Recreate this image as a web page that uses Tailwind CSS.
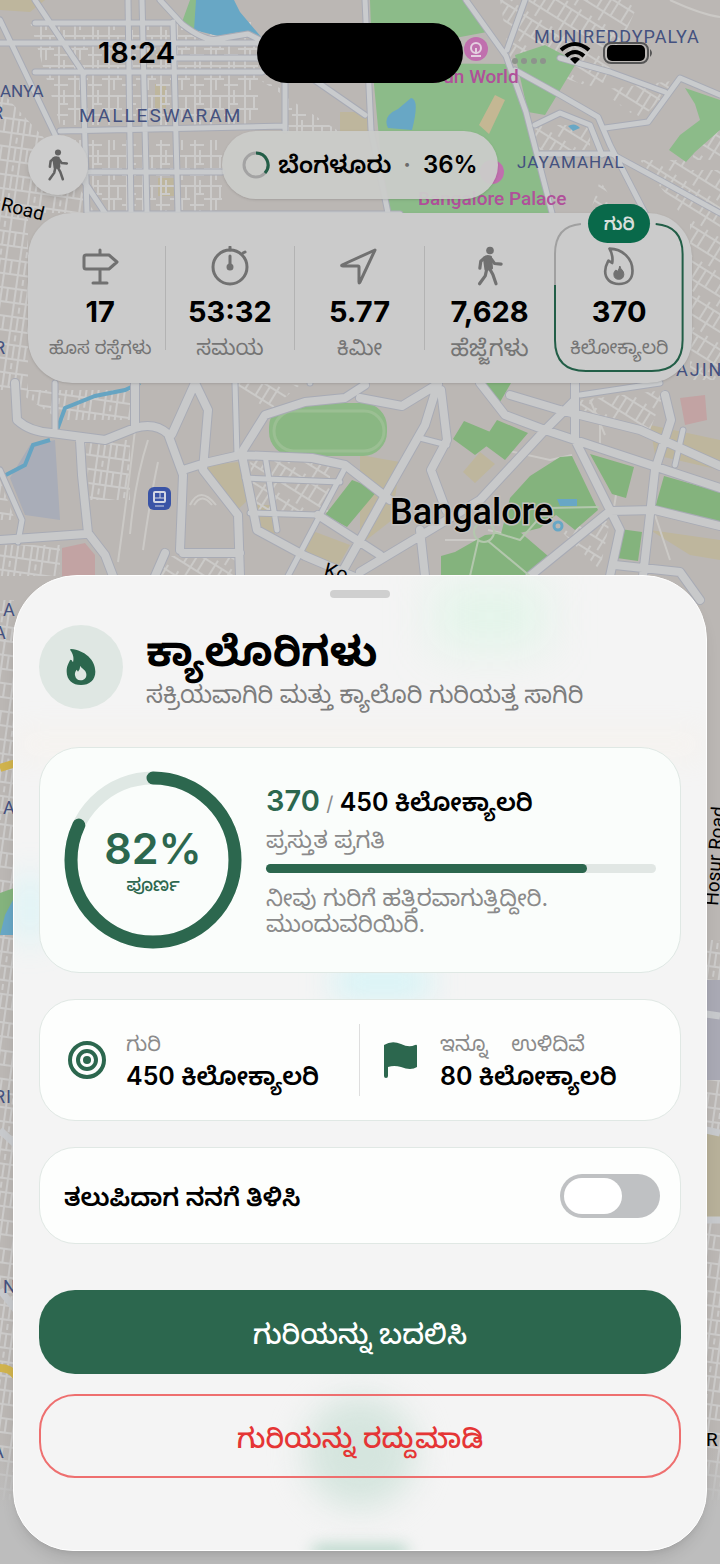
<!DOCTYPE html>
<html lang="kn">

<head>
    <meta charset="UTF-8">
    <meta name="viewport" content="width=device-width, initial-scale=1.0">
    <script src="https://cdn.jsdelivr.net/npm/@tailwindcss/browser@4"></script>
    <title>ಕ್ಯಾಲೊರಿಗಳು</title>
</head>

<body class="relative min-h-screen overflow-x-hidden bg-[#bdbab6] text-black font-[Inter,'Noto_Sans_Kannada','Noto_Sans',sans-serif]">

    <!-- Shared icons -->
    <svg class="hidden">
        <symbol id="walk" viewBox="0 0 80 126">
            <circle cx="40" cy="14" r="12" fill="currentColor" />
            <path d="M22 37Q30 30 42 35L45 70 27 74Z" fill="currentColor" stroke="currentColor" stroke-width="9" stroke-linejoin="round" />
            <path d="M22 38 11 48 8 70M45 42 54 55 75 57M30 72 25 94 7 119M38 70 49 90 59 119" fill="none" stroke="currentColor" stroke-width="10" stroke-linecap="round" stroke-linejoin="round" />
        </symbol>
    </svg>

    <!-- Map -->
    <svg class="absolute inset-0 w-full h-full" viewBox="0 0 720 1564" preserveAspectRatio="xMidYMin slice" aria-hidden="true">
        <defs>
            <pattern id="grid" width="34" height="30" patternUnits="userSpaceOnUse">
                <path d="M0 6H34M0 19H20M7 0V30M16 6V19M25 0V30M25 14H34M12 19V30M20 25H34M30 0V14" fill="none" stroke="#cccbca" stroke-width="2" />
            </pattern>
            <pattern id="dense" width="26" height="28" patternUnits="userSpaceOnUse" patternTransform="rotate(8)">
                <path d="M0 4H26M0 18H26M4 0V28M10 4V18M16 0V28M22 4V18M10 22V28" fill="none" stroke="#cccbca" stroke-width="2" />
            </pattern>
            <pattern id="slant" width="28" height="30" patternUnits="userSpaceOnUse" patternTransform="rotate(32)">
                <path d="M0 5H28M0 20H28M6 0V20M14 5V30M22 0V20" fill="none" stroke="#cbcac8" stroke-width="2" />
            </pattern>
            <linearGradient id="dock" x1="0" y1="0" x2="0" y2="1">
                <stop offset="0" stop-color="#bdbdbd" stop-opacity="0" />
                <stop offset="1" stop-color="#bdbdbd" />
            </linearGradient>
            <path id="roads" d="M0 20 60 145 105 213M35 0 84 74M83 72 87 213M128 0 131 213M142 0 147 213M173 22 178 213M35 23H172M0 43H258M172 58H258M35 72H262M60 131 285 126M90 172H222M90 214H400M160 0 182 24Q205 42 218 39L248 34 280 50M285 80V130M300 70 365 115M365 0 371 130 388 213M466 0 506 56 526 112 552 213M515 70 560 95 598 117 610 145 645 213M605 128 648 122 680 78 720 95M535 125 560 113 590 125 602 155M525 0 507 50M540 154H612L660 180 720 213M560 58 610 72 665 92M55 383V430M0 470 22 520 18 542M310 383V360M345 468 288 576M265 455 277 530M250 513 318 515M245 478 340 482M235 383 237 455M683 430 675 465M580 395 660 383M420 438 447 445" />
            <path id="avenues" d="M15 383 17 420Q30 432 52 433L105 440 135 428Q155 422 168 434L183 475 180 550M80 440 82 475 88 533 105 555 113 576M0 540 85 534M135 383V428M195 383 172 434M195 383 208 410 203 470 238 515 240 576M183 470 205 463 240 455 312 458 345 465 390 500M240 455 265 415 305 402 345 398 365 385M243 460 257 530 305 556 390 592M183 553H240M155 576 165 553M318 515 380 555M360 398 402 406 438 384M438 383 425 425 388 490 340 576M441 390 447 440 431 470 446 510M480 383 505 415 545 430 590 445 720 488M510 395 560 410 640 430 720 466M575 383V400L545 430 480 500 430 530 360 572M575 400V440L610 510 620 530 610 576M530 576 610 511 655 510 720 526M665 395 671 420 655 470 643 576M420 530 425 576M615 565 680 572 700 600" />
        </defs>
        <rect width="720" height="1564" fill="#bbb7b4" />

        <!-- tinted blocks -->
        <path d="M0 0H45L30 12 0 10ZM340 112H372V132H340ZM158 178H176V196H158ZM155 84H166V108H155ZM205 465 240 462 248 500 232 515ZM310 530 350 545 336 570 300 558ZM255 505H275V535H255ZM360 455 400 462 392 520 360 545ZM480 452 495 464 475 483 463 472ZM650 425 720 440 720 470 655 455ZM650 530 720 540V560L690 555Z" fill="#beb69d" />
        <path d="M30 445 55 440 60 520 25 515 10 478Z" fill="#a9adb8" />
        <path d="M62 548 85 543 95 555V576H62ZM680 398 705 395 707 420 685 425Z" fill="#c2a3a3" />

        <!-- small streets -->
        <path d="M30 22H258V125H60ZM70 140H222V212H105ZM260 80 340 132H285V90Z" fill="url(#grid)" />
        <path d="M0 90 55 150 95 213H0ZM0 213H28V390H0ZM85 440H130V500H90ZM15 390H130V420H60ZM0 545H60V576H0ZM0 480 15 520H0Z" fill="url(#dense)" />
        <path d="M500 0H640L600 90 510 60ZM600 90 680 80 640 120ZM530 125H590V150H540ZM640 160H720V213H680ZM690 213H720V380H690ZM690 170H720V100H705ZM600 180 620 213H590ZM580 400 665 390 650 430 580 410ZM250 460H330V515H255ZM165 556H235V576H160ZM560 530 610 520 600 570ZM225 383 300 385 270 410Z" fill="url(#slant)" />
        <path d="M135 430Q128 490 118 562M148 440Q135 480 130 534M158 462Q150 500 143 550M190 505Q200 485 216 505M194 505Q202 492 212 505M670 0Q700 14 720 17M600 420V445M590 400 605 435M505 450 550 460 572 455M655 515 670 560M445 540H480M488 530 510 535M620 470 612 520" fill="none" stroke="#cbc9c6" stroke-width="2" />

        <!-- parks -->
        <path d="M370 0H466L487 32 455 38 440 60H372ZM372 63 510 64 552 213H386ZM515 55 545 45 577 62 545 115 528 112ZM685 88 720 100V130L695 152 686 162 669 150 680 135 700 120 695 104ZM190 0H200L195 30 182 22Z" fill="#8cbb89" />
        <rect x="269" y="403" width="118" height="53" rx="24" fill="#8db986" />
        <rect x="274" y="411" width="110" height="40" rx="20" fill="#8ab783" stroke="#9bbf93" stroke-width="3" />
        <path d="M352 480 378 490 347 527 325 515ZM464 421 500 436 475 455 453 439ZM497 420 528 433 505 460 482 443ZM510 498 530 476 560 457 572 456 598 510 575 530 556 515 540 528 500 538ZM590 454 634 467 626 498 612 494ZM664 476 720 492V525L655 508ZM620 529 642 532 638 561 617 558ZM441 556 455 552 485 535 520 532 548 556 530 576H441ZM480 383H511L500 402Z" fill="#84b37d" />
        <path d="M495 95 505 100 489 134 479 125Z" fill="#c4b793" />

        <!-- water -->
        <path d="M196 0H234L240 12 262 38 240 32 218 36 194 30ZM388 128Q382 116 398 109L411 98Q420 99 412 130ZM568 126Q575 122 580 128L573 131ZM557 499H577V506H560Z" fill="#68a7c5" />
        <path d="M140 383 125 390 95 396 65 408 57 430M50 440 33 445 25 465 0 478" fill="none" stroke="#66a4c2" stroke-width="4" />
        <circle cx="558" cy="526" r="4" fill="none" stroke="#68a7c5" stroke-width="3" />

        <!-- main roads, casing then fill -->
        <g fill="none" stroke-linejoin="round" stroke-linecap="round">
            <use href="#roads" stroke="#a8abb5" stroke-width="7" />
            <use href="#avenues" stroke="#a8abb5" stroke-width="10" />
            <use href="#roads" stroke="#c9cbcd" stroke-width="5" />
            <use href="#avenues" stroke="#c8c9ca" stroke-width="8" />
            <circle cx="484" cy="532" r="10" stroke="#b3c7ad" stroke-width="2" />
            <path stroke="#b3c7ad" stroke-width="2" d="M478 541 470 576M488 541 530 576M494 532 520 540 548 508 598 507" />
        </g>

        <!-- edges either side of the sheet -->
        <path d="M0 600H14V1500H0ZM706 940H720V1500H706Z" fill="url(#dense)" />
        <path d="M706 1130H720V1220H706Z" fill="#b7b099" />
        <path d="M706 980H720V1080H706Z" fill="#a9a9b4" />
        <path d="M0 893 14 888V935H0Z" fill="#84b37d" />
        <path d="M14 898 5 915 0 935H14Z" fill="#68a7c5" />
        <path d="M0 768 16 763M0 1368Q10 1368 16 1376" fill="none" stroke="#d0b34d" stroke-width="8" />
        <path d="M706 1014 720 1016M706 1130 720 1133M706 1220H720M0 1130 16 1145M0 1290 16 1310" fill="none" stroke="#c7c9cc" stroke-width="7" />
        <rect y="1440" width="720" height="70" fill="url(#dock)" />
        <rect y="1510" width="720" height="54" fill="#bdbdbd" />

        <!-- place markers -->
        <circle cx="476" cy="49" r="12" fill="#c06fae" />
        <circle cx="476" cy="48" r="5" fill="none" stroke="#e4cfe0" stroke-width="2" />
        <path d="M476 48V54M471 56H481" stroke="#e4cfe0" stroke-width="2" />
        <circle cx="492" cy="172" r="12" fill="#c06fae" />
        <rect x="148" y="487" width="23" height="23" rx="6" fill="#3a54a6" />
        <rect x="154" y="492" width="11" height="10" rx="1" fill="none" stroke="#d3d7e4" stroke-width="2" />
        <path d="M154 498H165M160 492V498M155 506H164" stroke="#d3d7e4" stroke-width="1" />

        <!-- labels -->
        <g class="font-[Roboto,'Open_Sans',sans-serif]">
            <g fill="#44517f" font-size="19" letter-spacing="2">
                <text x="79" y="122">MALLESWARAM</text>
                <text x="534" y="43" font-size="18" letter-spacing="1">MUNIREDDYPALYA</text>
                <text x="517" y="168" font-size="17" letter-spacing="1">JAYAMAHAL</text>
                <text x="0" y="97" font-size="17" letter-spacing="0">ANYA</text>
                <text x="-8" y="119" font-size="18">R</text>
                <text x="-6" y="354" font-size="18">R</text>
                <text x="676" y="376" font-size="18">AJIN</text>
                <text x="3" y="616" font-size="18">A</text>
                <text x="-6" y="639" font-size="18">A</text>
                <text x="3" y="814" font-size="18">A</text>
                <text x="-6" y="1103" font-size="18" letter-spacing="1">RI</text>
                <text x="3" y="1293" font-size="18">N</text>
                <text x="-8" y="1458" font-size="18">A</text>
            </g>
            <g fill="#b0509a" font-size="19" font-weight="500">
                <text x="433" y="83">Fun World</text>
                <text x="418" y="205">Bangalore Palace</text>
            </g>
            <text x="0" y="210" font-size="19" transform="rotate(14 0 210)">Road</text>
            <text x="323" y="576" font-size="20" transform="rotate(14 323 576)">Ko</text>
            <text x="718" y="906" font-size="19" transform="rotate(-86 718 906)">Hosur Road</text>
            <text x="706" y="1446" font-size="19">R</text>
            <text x="390" y="524" font-size="36" font-weight="500" stroke="#c4c2bf" stroke-width="3" paint-order="stroke">Bangalore</text>
        </g>
    </svg>

    <div class="relative">
        <!-- Status bar -->
        <header class="grid grid-cols-[1fr_206px_1fr] items-center h-[106px]">
            <span class="pl-4 text-center text-[29px] font-semibold">18:24</span>
            <span class="h-[60px] rounded-full bg-black"></span>
            <span class="flex items-center gap-3 pl-12">
                <svg class="w-9 h-2 mt-4" viewBox="0 0 36 8" fill="#8d938c">
                    <circle cx="4" cy="4" r="3" />
                    <circle cx="13" cy="4" r="3" />
                    <circle cx="23" cy="4" r="3" />
                    <circle cx="32" cy="4" r="3" />
                </svg>
                <svg class="w-8 h-6" viewBox="0 0 32 24" fill="none" stroke="#000" stroke-width="4">
                    <path d="M2 9Q16 -3 30 9M7 15Q16 7 25 15" />
                    <path d="M16 23 11 18Q16 14 21 18Z" fill="#000" stroke="none" />
                </svg>
                <svg class="w-[51px] h-6" viewBox="0 0 51 24">
                    <rect x="1" y="2" width="44" height="20" rx="7" fill="none" stroke="#555" stroke-width="2" />
                    <rect x="4" y="4" width="38" height="16" rx="5" />
                    <path d="M47 8Q51 12 47 16Z" fill="#555" />
                </svg>
            </span>
        </header>

        <!-- Mode button and area pill -->
        <div class="grid grid-cols-[1fr_auto_1fr] items-center px-7 pt-[25px]">
            <button type="button" aria-label="ನಡಿಗೆ" class="flex items-center justify-center w-[60px] h-[60px] rounded-full bg-[#cdcdcd] text-[#626262] shadow-md">
                <svg class="w-6 h-8"><use href="#walk" /></svg>
            </button>
            <div class="flex items-center gap-2 h-[68px] px-5 rounded-full bg-[#cacbc9]/95 shadow-sm text-2xl font-semibold whitespace-nowrap">
                <svg class="w-7 h-7 shrink-0" viewBox="0 0 28 28" fill="none" stroke-width="3">
                    <circle cx="14" cy="14" r="12" stroke="#a3a3a3" />
                    <path d="M14 2A12 12 0 0 1 23 22" stroke="#225e47" />
                </svg>
                <span>ಬೆಂಗಳೂರು</span>
                <span class="px-1 text-[#6b6b6b]">·</span>
                <span>36%</span>
            </div>
        </div>

        <!-- Stats -->
        <section class="relative grid grid-cols-5 mx-7 mt-[14px] px-2 pt-[33px] h-[170px] rounded-[44px] bg-[#cbcbcb] shadow-sm text-center">
            <div class="flex flex-col items-center h-[104px] border-r border-[#b3b3b3]">
                <svg class="shrink-0 w-10 h-10" viewBox="0 0 40 40" fill="none" stroke="#717171" stroke-width="3" stroke-linecap="round" stroke-linejoin="round">
                    <path d="M20 4V8M6 9H29L37 16 29 23H6Q4 23 4 21V11Q4 9 6 9ZM20 24V37M13 37H27" />
                </svg>
                <strong class="mt-2 text-[29px] leading-9 font-bold">17</strong>
                <span class="mt-1 text-lg leading-7 text-[#757575] whitespace-nowrap">ಹೊಸ ರಸ್ತೆಗಳು</span>
            </div>
            <div class="flex flex-col items-center h-[104px] border-r border-[#b3b3b3]">
                <svg class="shrink-0 w-10 h-10" viewBox="0 0 40 40" fill="none" stroke="#717171" stroke-width="3" stroke-linecap="round">
                    <circle cx="20" cy="21" r="17" />
                    <path d="M20 1V4M33 7 35 6M20 10V20" />
                    <circle cx="20" cy="21" r="2" fill="#717171" />
                </svg>
                <strong class="mt-2 text-[29px] leading-9 font-bold">53:32</strong>
                <span class="mt-1 text-[21px] leading-7 text-[#757575] whitespace-nowrap">ಸಮಯ</span>
            </div>
            <div class="flex flex-col items-center h-[104px] border-r border-[#b3b3b3]">
                <svg class="shrink-0 w-10 h-10" viewBox="0 0 40 40" fill="none" stroke="#717171" stroke-width="3" stroke-linejoin="round">
                    <path d="M36 4 3 19Q2 20 4 20H19Q20 20 20 21V36Q20 38 21 36Z" />
                </svg>
                <strong class="mt-2 text-[29px] leading-9 font-bold">5.77</strong>
                <span class="mt-1 text-[21px] leading-7 text-[#757575] whitespace-nowrap">ಕಿಮೀ</span>
            </div>
            <div class="flex flex-col items-center h-[104px] text-[#717171]">
                <svg class="shrink-0 w-[26px] h-10"><use href="#walk" /></svg>
                <strong class="mt-2 text-[29px] leading-9 font-bold text-black">7,628</strong>
                <span class="mt-1 text-[23px] leading-7 text-[#757575] whitespace-nowrap">ಹೆಜ್ಜೆಗಳು</span>
            </div>
            <div class="relative flex flex-col items-center h-[104px]">
                <svg class="absolute -top-[24px] left-0 w-full h-[152px]" viewBox="0 0 130 152" preserveAspectRatio="none" fill="none">
                    <path d="M27 2Q1 4 1 32V63" stroke="#a0a0a0" stroke-width="2" />
                    <path d="M102 2Q129 4 129 32V118Q129 149 98 149H32Q1 149 1 118V63" stroke="#225e47" stroke-width="2" />
                </svg>
                <span class="absolute -top-[42px] flex items-center justify-center w-[62px] h-[39px] rounded-full bg-[#09694a] text-[#d6dfdb] text-lg font-semibold">ಗುರಿ</span>
                <svg class="shrink-0 w-8 h-10" viewBox="0 0 95 120" fill="none" stroke="#717171" stroke-width="8" stroke-linejoin="round">
                    <path d="M19 8C58 8 88 38 88 74C88 100 72 114 47 114C22 114 6 99 6 76C6 60 12 52 16 44L27 51Q31 30 19 8Z" />
                    <path d="M50 60C52 72 62 72 62 85C62 95 56 100 47 100C38 100 32 95 32 85C32 78 35 75 38 72L44 76Q48 68 50 60Z" fill="#717171" stroke-width="3" />
                </svg>
                <strong class="mt-2 text-[29px] leading-9 font-bold">370</strong>
                <span class="mt-1 text-[19px] leading-7 text-[#757575] whitespace-nowrap">ಕಿಲೋಕ್ಯಾಲರಿ</span>
            </div>
        </section>

        <!-- Goal sheet -->
        <main class="relative overflow-hidden mx-[13px] mt-48 mb-[13px] px-[25px] pb-[72px] rounded-t-[64px] rounded-b-[60px] border border-white bg-[#f4f4f4] shadow-lg">
            <!-- colours of the map glowing through -->
            <div class="absolute top-2 right-40 w-28 h-16 bg-green-200/30 blur-xl"></div>
            <div class="absolute top-[390px] left-80 w-24 h-8 bg-cyan-200/40 blur-lg"></div>
            <div class="absolute top-[300px] left-0 w-8 h-16 bg-cyan-200/30 blur-lg"></div>
            <div class="absolute top-[160px] left-0 w-full h-4 bg-orange-100/30 blur-lg"></div>
            <div class="absolute top-[820px] left-1/2 -translate-x-1/2 w-28 h-28 rounded-full bg-[#d5e5de] blur-lg"></div>
            <div class="absolute -bottom-2 left-1/2 -translate-x-1/2 w-24 h-3 rounded-full bg-[#a9cfbf] blur-sm"></div>

            <div class="relative">
                <div class="mx-auto mt-[14px] w-[60px] h-2 rounded-full bg-[#cfcfcf]"></div>

                <div class="flex items-center gap-[23px] mt-[27px] h-[84px]">
                    <div class="flex items-center justify-center shrink-0 w-[84px] h-[84px] rounded-full bg-[#dfe7e3]">
                        <svg class="w-[30px] h-[38px]" viewBox="0 0 90 112" fill="#2c674e">
                            <path fill-rule="evenodd" d="M15 2C56 6 88 34 88 70C88 95 70 110 45 110C20 110 2 94 2 70C2 54 7 46 12 36C13 34 16 34 17 36L21 42C25 30 21 16 13 6Q11 2 15 2ZM42 52C43 62 39 65 36 70L32 64C27 70 26 76 27 81C29 92 36 97 45 96C55 95 62 89 61 77C60 65 49 62 42 52Z" />
                        </svg>
                    </div>
                    <div class="pt-1">
                        <h1 class="text-[41px] leading-[52px] font-bold whitespace-nowrap">ಕ್ಯಾಲೊರಿಗಳು</h1>
                        <p class="text-2xl leading-9 text-[#7d7d7d]">ಸಕ್ರಿಯವಾಗಿರಿ ಮತ್ತು ಕ್ಯಾಲೊರಿ ಗುರಿಯತ್ತ ಸಾಗಿರಿ</p>
                    </div>
                </div>

                <!-- Progress -->
                <section class="flex items-center gap-6 mt-[38px] px-6 h-[226px] rounded-[40px] border border-[#dfe8e4] bg-[#fafdfb]">
                    <div class="relative shrink-0 w-[178px] h-[178px] flex flex-col items-center justify-center pt-1 text-[#2c674e]">
                        <svg class="absolute inset-0 -rotate-90" viewBox="0 0 178 178" fill="none" stroke-width="13">
                            <circle cx="89" cy="89" r="82" stroke="#dfe8e4" />
                            <circle cx="89" cy="89" r="82" stroke="#2c674e" stroke-linecap="round" pathLength="100" stroke-dasharray="82 100" />
                        </svg>
                        <strong class="text-[43px] leading-[46px] font-semibold">82%</strong>
                        <span class="text-lg leading-7 font-medium">ಪೂರ್ಣ</span>
                    </div>
                    <div class="flex-1 min-w-0">
                        <p class="text-[25px] leading-9 font-semibold whitespace-nowrap"><span class="text-[29px] text-[#2c674e]">370</span> <span class="text-xl font-normal text-[#8b8b8b]">/</span> 450 ಕಿಲೋಕ್ಯಾಲರಿ</p>
                        <p class="mt-1 text-[23px] leading-8 text-[#8b8b8b]">ಪ್ರಸ್ತುತ ಪ್ರಗತಿ</p>
                        <div class="mt-2 h-[9px] rounded-full bg-[#e1e7e4]">
                            <div class="h-full rounded-full bg-[#2c674e]" style="width: 82.2%"></div>
                        </div>
                        <p class="mt-3 text-[23px] leading-[26px] text-[#8b8b8b]">ನೀವು ಗುರಿಗೆ ಹತ್ತಿರವಾಗುತ್ತಿದ್ದೀರಿ. ಮುಂದುವರಿಯಿರಿ.</p>
                    </div>
                </section>

                <!-- Goal / remaining -->
                <section class="grid grid-cols-2 items-center mt-[26px] h-[122px] rounded-[36px] border border-[#e0e8e4] bg-[#fdfefd]">
                    <div class="flex items-center gap-5 pl-7 h-[72px] border-r border-[#dedede]">
                        <svg class="shrink-0 w-[38px] h-[38px]" viewBox="0 0 38 38" fill="none" stroke="#2c674e" stroke-width="4">
                            <circle cx="19" cy="19" r="17" />
                            <circle cx="19" cy="19" r="9" />
                            <circle cx="19" cy="19" r="4" fill="#2c674e" stroke="none" />
                        </svg>
                        <div class="pt-1">
                            <p class="text-[21px] leading-7 text-[#8b8b8b]">ಗುರಿ</p>
                            <p class="text-[25px] leading-9 font-semibold whitespace-nowrap">450 ಕಿಲೋಕ್ಯಾಲರಿ</p>
                        </div>
                    </div>
                    <div class="flex items-center gap-[22px] pl-6">
                        <svg class="shrink-0 w-[34px] h-9" viewBox="0 0 34 36" fill="#2c674e">
                            <path d="M0 3Q8 -2 17 2Q25 6 31 3Q33 2 33 4V25Q27 29 17 25Q10 23 4 25V34Q4 36 2 36Q0 36 0 34Z" />
                        </svg>
                        <div class="pt-1">
                            <p class="text-[21px] leading-7 text-[#8b8b8b] whitespace-pre">ಇನ್ನೂ    ಉಳಿದಿವೆ</p>
                            <p class="text-[25px] leading-9 font-semibold whitespace-nowrap">80 ಕಿಲೋಕ್ಯಾಲರಿ</p>
                        </div>
                    </div>
                </section>

                <!-- Notify switch -->
                <section class="flex items-center justify-between mt-[26px] pl-6 pr-5 h-[97px] rounded-[36px] border border-[#e0e8e4] bg-[#fdfefd]">
                    <label for="notify" class="pt-1 text-[25px] font-semibold">ತಲುಪಿದಾಗ ನನಗೆ ತಿಳಿಸಿ</label>
                    <input id="notify" type="checkbox" role="switch" class="appearance-none w-[100px] h-11 p-1 rounded-full bg-[#bfc1c3] before:block before:w-[58px] before:h-9 before:rounded-full before:bg-white checked:bg-[#2c674e] checked:before:ml-auto">
                </section>

                <button type="button" class="block w-full h-[84px] mt-[46px] pt-1 rounded-[36px] bg-[#2c674e] text-[28px] font-medium text-white">ಗುರಿಯನ್ನು ಬದಲಿಸಿ</button>
                <button type="button" class="block w-full h-[84px] mt-5 pt-1 rounded-[36px] border-2 border-[#ee6f6f] text-[28px] font-medium text-[#e53535]">ಗುರಿಯನ್ನು ರದ್ದುಮಾಡಿ</button>
            </div>
        </main>
    </div>
</body>

</html>
